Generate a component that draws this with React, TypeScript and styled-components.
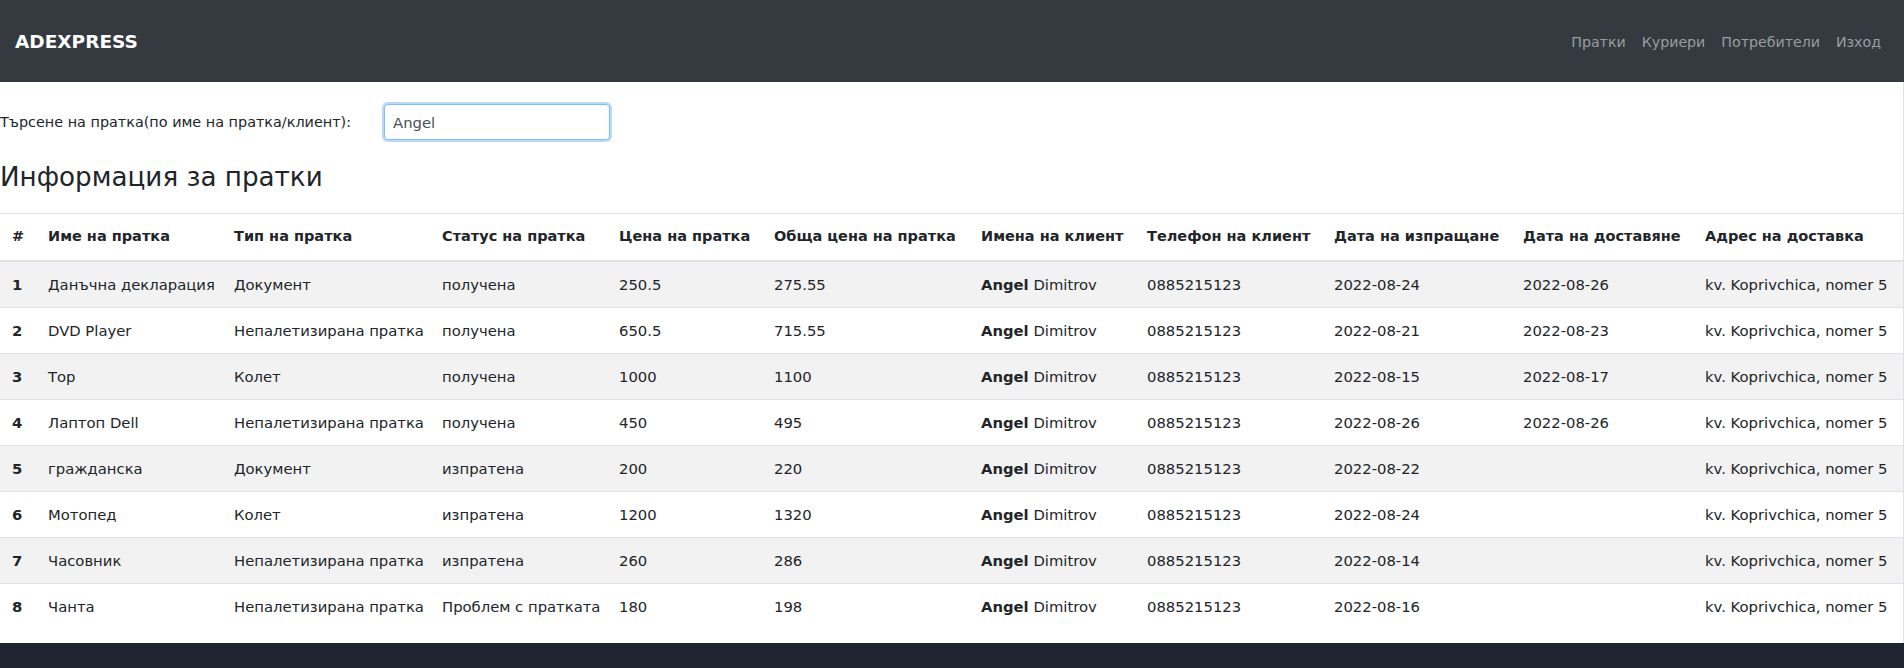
import React from 'react';
import styled, { createGlobalStyle } from 'styled-components';

const GlobalStyle = createGlobalStyle`
  body {
    margin: 0;
    background-color: #fff;
    color: #212529;
    font-family: "DejaVu Sans", Verdana, sans-serif;
  }
`;

const Page = styled.div`
  display: flex;
  flex-direction: column;
  min-height: 668px;
`;

const Navbar = styled.nav`
  display: flex;
  align-items: center;
  justify-content: space-between;
  height: 82px;
  padding: 0 23px 0 15px;
  background-color: #343a40;
`;

const Brand = styled.a`
  color: #fff;
  font-size: 18.5px;
  font-weight: 700;
  text-decoration: none;
`;

const NavLinks = styled.ul`
  display: flex;
  gap: 16px;
  margin: 0;
  padding: 0;
  list-style: none;
`;

const NavLink = styled.a`
  color: #9a9da0;
  font-size: 14.2px;
  text-decoration: none;
`;

const Main = styled.main`
  flex: 1;
  padding-bottom: 13px;
  border-right: 1px solid #dee2e6;
`;

const SearchRow = styled.div`
  display: flex;
  align-items: center;
  gap: 33px;
  padding-top: 20px;
`;

const SearchLabel = styled.label`
  font-size: 14.4px;
`;

const SearchInput = styled.input`
  box-sizing: border-box;
  width: 226px;
  height: 36px;
  margin: 2px 0;
  padding: 0 8px;
  border: 1px solid #80bdff;
  border-radius: 4px;
  outline: none;
  box-shadow: 0 0 0 2px #b8d9fc;
  color: #495057;
  font-family: "DejaVu Sans", Verdana, sans-serif;
  font-size: 14.8px;
`;

const Title = styled.h2`
  margin: 20px 0 20px;
  font-size: 26.2px;
  font-weight: 400;
  line-height: 1.2;
`;

const Table = styled.table`
  width: 100%;
  table-layout: fixed;
  border-collapse: collapse;
  font-size: 14.8px;

  th,
  td {
    padding: 11px 12px;
    line-height: 23px;
    text-align: left;
    vertical-align: top;
    white-space: nowrap;
  }

  thead th {
    padding-bottom: 12px;
    border-top: 1px solid #dee2e6;
    border-bottom: 2px solid #dee2e6;
    font-size: 14.5px;
    font-weight: 700;
  }

  tbody td,
  tbody th {
    border-top: 1px solid #dee2e6;
  }

  tbody tr:first-child td,
  tbody tr:first-child th {
    border-top: 0;
  }
`;

const Row = styled.tr<{ $striped: boolean }>`
  background-color: ${(p) => (p.$striped ? '#f2f2f2' : 'transparent')};
`;

const Footer = styled.footer`
  height: 25px;
  background-color: #1e2430;
`;

const columns = [
  { title: '#', width: 36 },
  { title: 'Име на пратка', width: 186 },
  { title: 'Тип на пратка', width: 208 },
  { title: 'Статус на пратка', width: 177 },
  { title: 'Цена на пратка', width: 155 },
  { title: 'Обща цена на пратка', width: 207 },
  { title: 'Имена на клиент', width: 166 },
  { title: 'Телефон на клиент', width: 187 },
  { title: 'Дата на изпращане', width: 189 },
  { title: 'Дата на доставяне', width: 182 },
  { title: 'Адрес на доставка', width: 210 },
];

const parcels = [
  { name: 'Данъчна декларация', type: 'Документ', status: 'получена', price: '250.5', total: '275.55', sent: '2022-08-24', delivered: '2022-08-26' },
  { name: 'DVD Player', type: 'Непалетизирана пратка', status: 'получена', price: '650.5', total: '715.55', sent: '2022-08-21', delivered: '2022-08-23' },
  { name: 'Тор', type: 'Колет', status: 'получена', price: '1000', total: '1100', sent: '2022-08-15', delivered: '2022-08-17' },
  { name: 'Лаптоп Dell', type: 'Непалетизирана пратка', status: 'получена', price: '450', total: '495', sent: '2022-08-26', delivered: '2022-08-26' },
  { name: 'гражданска', type: 'Документ', status: 'изпратена', price: '200', total: '220', sent: '2022-08-22', delivered: '' },
  { name: 'Мотопед', type: 'Колет', status: 'изпратена', price: '1200', total: '1320', sent: '2022-08-24', delivered: '' },
  { name: 'Часовник', type: 'Непалетизирана пратка', status: 'изпратена', price: '260', total: '286', sent: '2022-08-14', delivered: '' },
  { name: 'Чанта', type: 'Непалетизирана пратка', status: 'Проблем с пратката', price: '180', total: '198', sent: '2022-08-16', delivered: '' },
];

function App() {
  return (
    <Page>
      <GlobalStyle />
      <Navbar>
        <Brand href="#">ADEXPRESS</Brand>
        <NavLinks>
          <li><NavLink href="#">Пратки</NavLink></li>
          <li><NavLink href="#">Куриери</NavLink></li>
          <li><NavLink href="#">Потребители</NavLink></li>
          <li><NavLink href="#">Изход</NavLink></li>
        </NavLinks>
      </Navbar>
      <Main>
        <SearchRow>
          <SearchLabel htmlFor="search">Търсене на пратка(по име на пратка/клиент):</SearchLabel>
          <SearchInput id="search" type="text" defaultValue="Angel" autoFocus />
        </SearchRow>
        <Title>Информация за пратки</Title>
        <Table>
          <colgroup>
            {columns.map((c) => (
              <col key={c.title} style={{ width: c.width }} />
            ))}
          </colgroup>
          <thead>
            <tr>
              {columns.map((c) => (
                <th key={c.title}>{c.title}</th>
              ))}
            </tr>
          </thead>
          <tbody>
            {parcels.map((p, i) => (
              <Row key={p.name} $striped={i % 2 === 0}>
                <th scope="row">{i + 1}</th>
                <td>{p.name}</td>
                <td>{p.type}</td>
                <td>{p.status}</td>
                <td>{p.price}</td>
                <td>{p.total}</td>
                <td>
                  <b>Angel</b> Dimitrov
                </td>
                <td>0885215123</td>
                <td>{p.sent}</td>
                <td>{p.delivered}</td>
                <td>kv. Koprivchica, nomer 5</td>
              </Row>
            ))}
          </tbody>
        </Table>
      </Main>
      <Footer />
    </Page>
  );
}

export default App;
